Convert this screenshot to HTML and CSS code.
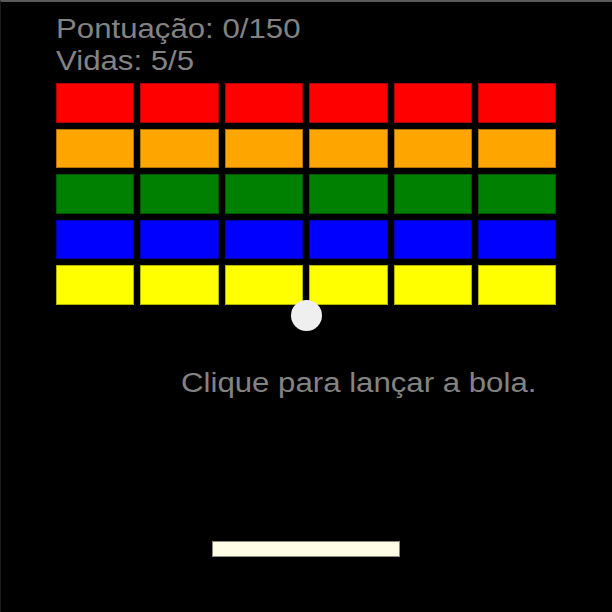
FILE: index.html
```html
<!DOCTYPE html>
<html lang="pt">
<head>
<meta charset="utf-8">
<title>Breakout</title>
<link rel="stylesheet" href="styles.css">
</head>
<body>
<div class="stage">
  <div class="hud">
    <div class="hud-line">Pontuação: 0/150</div>
    <div class="hud-line">Vidas: 5/5</div>
  </div>
  <div class="bricks">
    <div class="brick red"></div><div class="brick red"></div><div class="brick red"></div><div class="brick red"></div><div class="brick red"></div><div class="brick red"></div>
    <div class="brick orange"></div><div class="brick orange"></div><div class="brick orange"></div><div class="brick orange"></div><div class="brick orange"></div><div class="brick orange"></div>
    <div class="brick green"></div><div class="brick green"></div><div class="brick green"></div><div class="brick green"></div><div class="brick green"></div><div class="brick green"></div>
    <div class="brick blue"></div><div class="brick blue"></div><div class="brick blue"></div><div class="brick blue"></div><div class="brick blue"></div><div class="brick blue"></div>
    <div class="brick yellow"></div><div class="brick yellow"></div><div class="brick yellow"></div><div class="brick yellow"></div><div class="brick yellow"></div><div class="brick yellow"></div>
  </div>
  <div class="message">Clique para lançar a bola.</div>
  <div class="ball"></div>
  <div class="paddle"></div>
</div>
</body>
</html>
```
FILE: styles.css
```css
html, body {
  margin: 0;
  padding: 0;
  background: #000;
}
.stage {
  position: relative;
  width: 612px;
  height: 612px;
  box-sizing: border-box;
  background: #000;
  border-top: 2px solid #5a5a5a;
  border-left: 1px solid #1a1a1a;
  overflow: hidden;
  font-family: "Liberation Sans", Arial, sans-serif;
  color: #838383;
  display: flex;
  flex-direction: column;
}
.hud {
  padding: 11px 0 0 55px;
  height: 69px;
  box-sizing: border-box;
}
.hud-line {
  font-size: 27px;
  line-height: 32px;
  transform: scaleX(1.155);
  transform-origin: left center;
  white-space: nowrap;
}
.bricks {
  margin-left: 55px;
  margin-top: 12px;
  display: grid;
  grid-template-columns: repeat(6, 78.4px);
  grid-template-rows: repeat(5, 39.5px);
  column-gap: 6px;
  row-gap: 6px;
}
.brick {
  box-shadow: inset 0 0 0 1px rgba(0, 0, 0, 0.3);
}
.red { background: #ff0000; }
.orange { background: #ffa500; }
.green { background: #008000; }
.blue { background: #0000ff; }
.yellow { background: #ffff00; }
.message {
  margin: 63px 0 0 180px;
  font-size: 27px;
  line-height: 30px;
  transform: scaleX(1.155);
  transform-origin: left center;
  white-space: nowrap;
}
.ball {
  position: absolute;
  left: 290px;
  top: 298px;
  width: 31px;
  height: 31px;
  border-radius: 50%;
  background: #efefef;
}
.paddle {
  position: absolute;
  left: 211px;
  top: 539px;
  width: 188px;
  height: 16px;
  box-sizing: border-box;
  background: #fffde6;
  border: 1px solid #8a8a80;
}
```
